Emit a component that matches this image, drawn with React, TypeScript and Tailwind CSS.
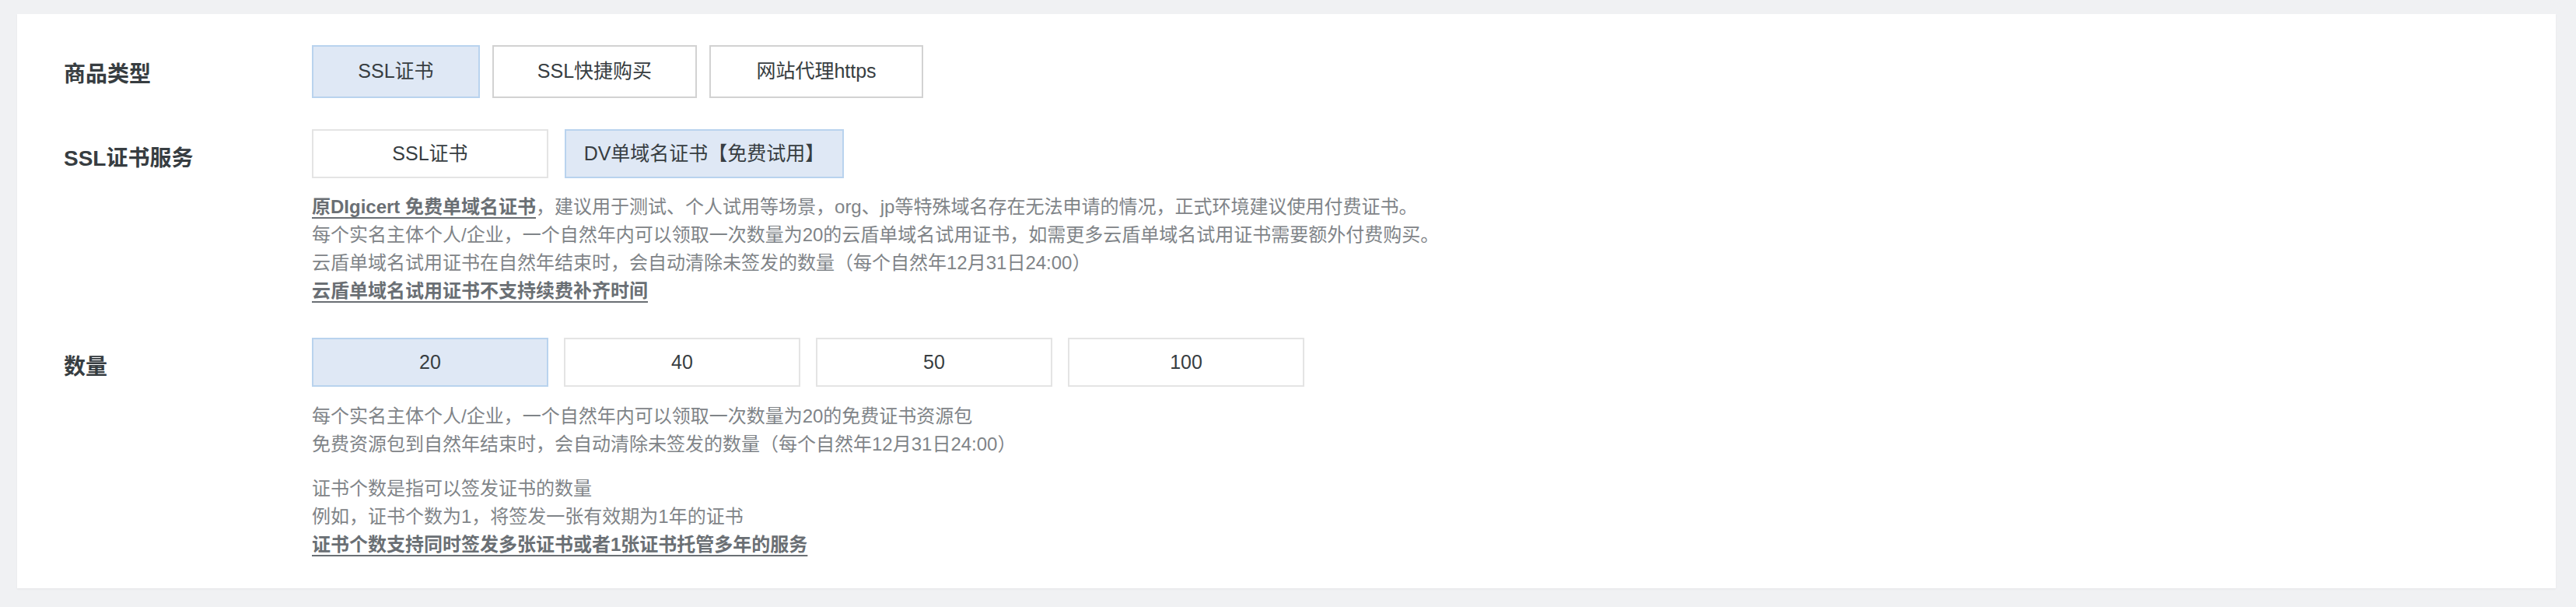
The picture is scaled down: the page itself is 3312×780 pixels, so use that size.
import React from "react";

const FONT = { fontFamily: '"Liberation Sans", "Noto Sans CJK SC", sans-serif' };

function Btn({
  children,
  selected,
  className,
}: {
  children: React.ReactNode;
  selected?: boolean;
  className: string;
}) {
  return (
    <div
      className={
        "flex items-center justify-center border-2 text-[25px] text-[#373d41] " +
        (selected ? "bg-[#dfe8f5] border-[#b9d3ee] " : "bg-white ") +
        className
      }
    >
      {children}
    </div>
  );
}

function Label({ children }: { children: React.ReactNode }) {
  return (
    <div className="w-[319px] shrink-0 pt-[18px] text-[28px] leading-[40px] font-bold text-[#373d41]">
      {children}
    </div>
  );
}

function Link({ children }: { children: React.ReactNode }) {
  return (
    <span className="font-bold text-[#6a6f74] underline underline-offset-[5px] decoration-2">
      {children}
    </span>
  );
}

export default function App() {
  return (
    <div className="min-h-[780px] w-full bg-[#f0f1f3] pt-[18px] pl-[22px] pr-[26px] pb-[24px]" style={FONT}>
      <div className="bg-white shadow-[0_1px_2px_rgba(0,0,0,0.06)] pl-[60px] pt-[40px] pb-[38px] min-h-[738px]">
        {/* Row 1 */}
        <div className="flex">
          <Label>商品类型</Label>
          <div className="flex gap-[16px]">
            <Btn selected className="w-[216px] h-[68px]">SSL证书</Btn>
            <Btn className="w-[263px] h-[68px] border-[#d2d2d2]">SSL快捷购买</Btn>
            <Btn className="w-[275px] h-[68px] border-[#d2d2d2]">网站代理https</Btn>
          </div>
        </div>

        {/* Row 2 */}
        <div className="flex mt-[40px]">
          <Label>SSL证书服务</Label>
          <div className="flex flex-col">
            <div className="flex gap-[21px]">
              <Btn className="w-[304px] h-[63px] border-[#e4e4e4]">SSL证书</Btn>
              <Btn selected className="w-[359px] h-[63px]">DV单域名证书【免费试用】</Btn>
            </div>
            <div className="mt-[19px] text-[24px] leading-[36px] text-[#7f8488]">
              <div>
                <Link>原DIgicert 免费单域名证书</Link>，建议用于测试、个人试用等场景，org、jp等特殊域名存在无法申请的情况，正式环境建议使用付费证书。
              </div>
              <div>每个实名主体个人/企业，一个自然年内可以领取一次数量为20的云盾单域名试用证书，如需更多云盾单域名试用证书需要额外付费购买。</div>
              <div>云盾单域名试用证书在自然年结束时，会自动清除未签发的数量（每个自然年12月31日24:00）</div>
              <div>
                <Link>云盾单域名试用证书不支持续费补齐时间</Link>
              </div>
            </div>
          </div>
        </div>

        {/* Row 3 */}
        <div className="flex mt-[42px]">
          <Label>数量</Label>
          <div className="flex flex-col">
            <div className="flex gap-[20px]">
              <Btn selected className="w-[304px] h-[63px]">20</Btn>
              <Btn className="w-[304px] h-[63px] border-[#e4e4e4]">40</Btn>
              <Btn className="w-[304px] h-[63px] border-[#e4e4e4]">50</Btn>
              <Btn className="w-[304px] h-[63px] border-[#e4e4e4]">100</Btn>
            </div>
            <div className="mt-[20px] text-[24px] leading-[36px] text-[#7f8488]">
              <div>每个实名主体个人/企业，一个自然年内可以领取一次数量为20的免费证书资源包</div>
              <div>免费资源包到自然年结束时，会自动清除未签发的数量（每个自然年12月31日24:00）</div>
            </div>
            <div className="mt-[21px] text-[24px] leading-[36px] text-[#7f8488]">
              <div>证书个数是指可以签发证书的数量</div>
              <div>例如，证书个数为1，将签发一张有效期为1年的证书</div>
              <div>
                <Link>证书个数支持同时签发多张证书或者1张证书托管多年的服务</Link>
              </div>
            </div>
          </div>
        </div>
      </div>
    </div>
  );
}
